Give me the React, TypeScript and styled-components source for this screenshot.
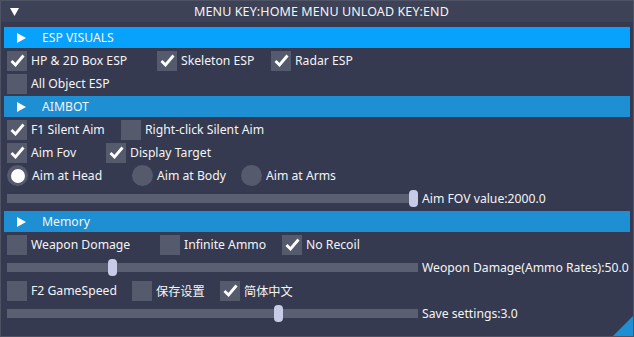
import React from 'react';
import styled, { createGlobalStyle } from 'styled-components';

const GlobalStyle = createGlobalStyle`
  html, body {
    margin: 0;
    padding: 0;
    background: #353a50;
  }
  * {
    box-sizing: border-box;
  }
`;

const Window = styled.div`
  position: relative;
  width: 634px;
  height: 337px;
  background: #353a50;
  border: 1px solid #4e5366;
  font-family: 'Noto Sans', 'Noto Sans CJK SC', sans-serif;
  font-size: 12.2px;
  color: #f4f4f6;
  overflow: hidden;
`;

const TitleBar = styled.div`
  height: 21px;
  background: #3d4257;
  display: grid;
  grid-template-columns: 1fr auto 1fr;
  align-items: center;
  padding-left: 9px;
`;

const TitleText = styled.span`
  font-size: 12.5px;
  letter-spacing: 0.1px;
`;

const Body = styled.div`
  display: flex;
  flex-direction: column;
  gap: 2px;
  padding: 5px 3px 0;
`;

const Header = styled.div<{ $hot?: boolean }>`
  height: 21px;
  display: flex;
  align-items: center;
  gap: 16px;
  padding-left: 13px;
  background: ${({ $hot }) => ($hot ? '#08a1fb' : '#1e8fd2')};
`;

const Row = styled.div`
  height: 21px;
  display: flex;
  align-items: center;
  padding: 0 3px;
`;

const Item = styled.label<{ $w?: number }>`
  display: flex;
  align-items: center;
  gap: 4px;
  height: 21px;
  flex: ${({ $w }) => ($w ? `0 0 ${$w}px` : '0 0 auto')};
  white-space: nowrap;
`;

const Box = styled.span`
  width: 20px;
  height: 20px;
  background: #565a6d;
  display: flex;
  align-items: center;
  justify-content: center;
`;

const Radio = styled.span<{ $on?: boolean }>`
  width: 21px;
  height: 21px;
  border-radius: 50%;
  background: #565a6d;
  display: flex;
  align-items: center;
  justify-content: center;
  &::after {
    content: '';
    display: ${({ $on }) => ($on ? 'block' : 'none')};
    width: 14px;
    height: 14px;
    border-radius: 50%;
    background: #ffffff;
  }
`;

const Track = styled.div`
  position: relative;
  flex: 0 0 411px;
  height: 9px;
  background: #5b5f72;
`;

const Grab = styled.div`
  position: absolute;
  top: -4px;
  width: 9px;
  height: 17px;
  border-radius: 4px;
  background: #c7cbe7;
`;

const SliderLabel = styled.span`
  margin-left: 4px;
  white-space: nowrap;
`;

const ResizeGrip = styled.div`
  position: absolute;
  right: 0;
  bottom: 0;
  width: 20px;
  height: 20px;
  background: #1e8fd2;
  clip-path: polygon(100% 0, 100% 100%, 0 100%);
`;

const Check = () => (
  <svg width="15" height="13" viewBox="0 0 15 13">
    <polyline points="1.5,7 5.5,11 13.5,1.5" fill="none" stroke="#fff" strokeWidth="2.8" />
  </svg>
);

const TriDown = () => (
  <svg width="9" height="8" viewBox="0 0 9 8">
    <polygon points="0,0 9,0 4.5,8" fill="#fff" />
  </svg>
);

const TriRight = () => (
  <svg width="9" height="10" viewBox="0 0 9 10">
    <polygon points="0,0 9,5 0,10" fill="#fff" />
  </svg>
);

const CheckBox: React.FC<{ label: string; on?: boolean; w?: number }> = ({ label, on, w }) => (
  <Item $w={w}>
    <Box>{on && <Check />}</Box>
    <span>{label}</span>
  </Item>
);

const RadioItem: React.FC<{ label: string; on?: boolean; w?: number }> = ({ label, on, w }) => (
  <Item $w={w}>
    <Radio $on={on} />
    <span>{label}</span>
  </Item>
);

const Slider: React.FC<{ frac: number; label: string }> = ({ frac, label }) => (
  <Row>
    <Track>
      <Grab style={{ left: `${Math.round(frac * 402)}px` }} />
    </Track>
    <SliderLabel>{label}</SliderLabel>
  </Row>
);

const Section: React.FC<{ title: string; hot?: boolean }> = ({ title, hot }) => (
  <Header $hot={hot}>
    <TriRight />
    <span>{title}</span>
  </Header>
);

export default function App() {
  return (
    <>
      <GlobalStyle />
      <Window>
        <TitleBar>
          <TriDown />
          <TitleText>MENU KEY:HOME MENU UNLOAD KEY:END</TitleText>
          <span />
        </TitleBar>
        <Body>
          <Section title="ESP VISUALS" hot />
          <Row>
            <CheckBox label="HP & 2D Box ESP" on w={150} />
            <CheckBox label="Skeleton ESP" on w={114} />
            <CheckBox label="Radar ESP" on />
          </Row>
          <Row>
            <CheckBox label="All Object ESP" />
          </Row>

          <Section title="AIMBOT" />
          <Row>
            <CheckBox label="F1 Silent Aim" on w={114} />
            <CheckBox label="Right-click Silent Aim" />
          </Row>
          <Row>
            <CheckBox label="Aim Fov" on w={99} />
            <CheckBox label="Display Target" on />
          </Row>
          <Row>
            <RadioItem label="Aim at Head" on w={125} />
            <RadioItem label="Aim at Body" w={109} />
            <RadioItem label="Aim at Arms" />
          </Row>
          <Slider frac={1} label="Aim FOV value:2000.0" />

          <Section title="Memory" />
          <Row>
            <CheckBox label="Weapon Domage" w={153} />
            <CheckBox label="Infinite Ammo" w={122} />
            <CheckBox label="No Recoil" on />
          </Row>
          <Slider frac={0.25} label="Weopon Damage(Ammo Rates):50.0" />
          <Row>
            <CheckBox label="F2 GameSpeed" w={125} />
            <CheckBox label="保存设置" w={88} />
            <CheckBox label="简体中文" on />
          </Row>
          <Slider frac={0.664} label="Save settings:3.0" />
        </Body>
        <ResizeGrip />
      </Window>
    </>
  );
}
